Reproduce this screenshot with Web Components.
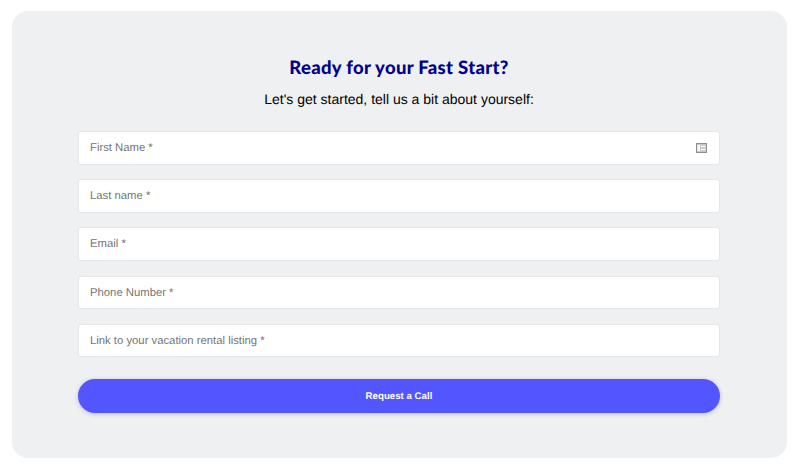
<!DOCTYPE html>
<html>
<head>
<meta charset="utf-8">
<style>
  html, body { margin: 0; height: 466px; background: #fff; overflow: hidden; }
</style>
</head>
<body>
<fast-start-form>
  <span slot="title">Ready for your Fast Start?</span>
  <span slot="intro">Let's get started, tell us a bit about yourself:</span>
  <form-field icon>First Name *</form-field>
  <form-field>Last name *</form-field>
  <form-field>Email *</form-field>
  <form-field>Phone Number *</form-field>
  <form-field>Link to your vacation rental listing *</form-field>
  <pill-button>Request a Call</pill-button>
</fast-start-form>

<script>
class FastStartForm extends HTMLElement {
  constructor() {
    super();
    this.attachShadow({ mode: "open" });
    this.shadowRoot.innerHTML = `
      <style>
        :host {
          display: block;
          box-sizing: border-box;
          width: 775px;
          height: 447px;
          margin: 11px 0 0 12px;
          padding: 44px 67px 0 66px;
          background: #eff0f2;
          border-radius: 16px;
          font-family: "Liberation Sans", Arial, sans-serif;
          text-rendering: geometricPrecision;
        }
        h1 {
          margin: 0;
          height: 25px;
          line-height: 25px;
          text-align: center;
          font-family: "Lato", "Liberation Sans", sans-serif;
          font-size: 18.5px;
          font-weight: 900;
          letter-spacing: 0.3px;
          color: #00008b;
        }
        p {
          margin: 9px 0 0 0;
          height: 20px;
          line-height: 20px;
          text-align: center;
          font-size: 14px;
          color: #000;
        }
        .fields {
          display: flex;
          flex-direction: column;
          gap: 14.7px;
          margin-top: 22px;
        }
      </style>
      <h1><slot name="title"></slot></h1>
      <p><slot name="intro"></slot></p>
      <div class="fields"><slot></slot></div>
    `;
  }
}

class FormField extends HTMLElement {
  constructor() {
    super();
    this.attachShadow({ mode: "open" });
    this.shadowRoot.innerHTML = `
      <style>
        :host {
          display: flex;
          align-items: center;
          justify-content: space-between;
          box-sizing: border-box;
          height: 33.5px;
          padding: 0.6px 12px 0 11px;
          background: #fff;
          border: 1px solid #e6e7ea;
          border-radius: 3px;
          font-size: 11.3px;
          color: #757575;
        }
        svg { display: none; width: 11px; height: 10px; }
        :host([icon]) svg { display: block; }
      </style>
      <slot></slot>
      <svg viewBox="0 0 11 10">
        <rect x="0.5" y="0.5" width="10" height="9" fill="#c9c9c9" stroke="#8f8f8f"/>
        <rect x="1.5" y="2" width="2.5" height="6" fill="#fff"/>
        <path d="M5 3.5h4.5M5 6.5h4.5" stroke="#fff" stroke-width="1" fill="none"/>
      </svg>
    `;
  }
}

class PillButton extends HTMLElement {
  constructor() {
    super();
    this.attachShadow({ mode: "open" });
    this.shadowRoot.innerHTML = `
      <style>
        :host {
          display: flex;
          align-items: center;
          justify-content: center;
          box-sizing: border-box;
          height: 34px;
          margin-top: 7px;
          padding-top: 1px;
          background: #5356ff;
          border-radius: 17px;
          box-shadow: 0 1px 4px rgba(60, 60, 120, 0.3);
          font-size: 9.7px;
          font-weight: 700;
          color: #fff;
        }
      </style>
      <slot></slot>
    `;
  }
}

customElements.define("fast-start-form", FastStartForm);
customElements.define("form-field", FormField);
customElements.define("pill-button", PillButton);
</script>
</body>
</html>
